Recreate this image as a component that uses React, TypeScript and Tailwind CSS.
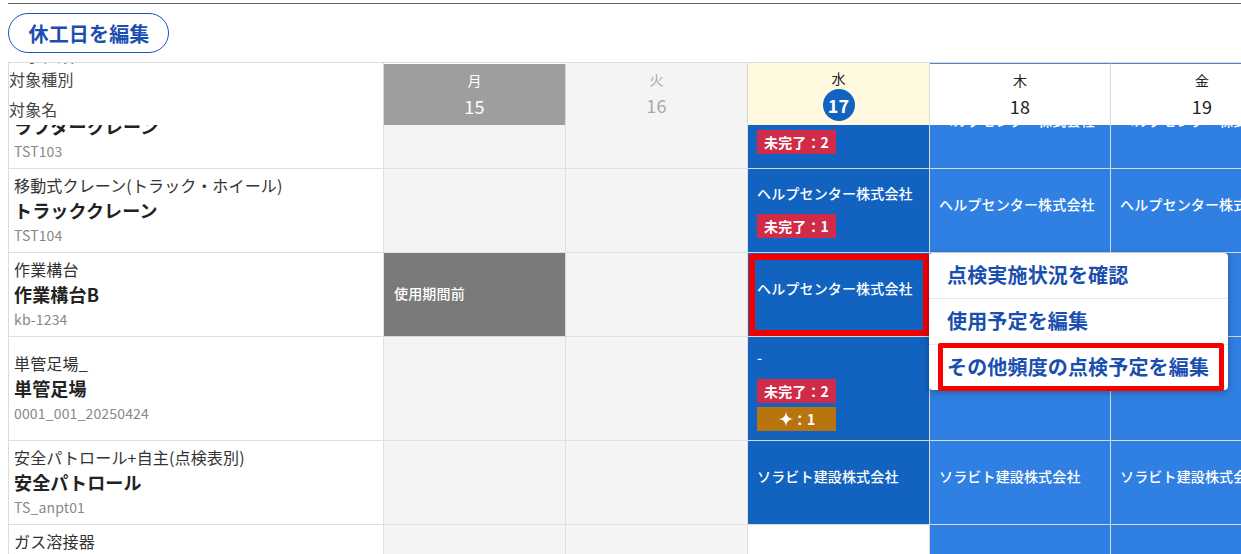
const rows = [
  { label: "ラフタークレーン", name: "ラフタークレーン", code: "TST103", height: "h-[84px]", before: false },
  { label: "移動式クレーン(トラック・ホイール)", name: "トラッククレーン", code: "TST104", height: "h-[84px]", before: false },
  { label: "作業構台", name: "作業構台B", code: "kb-1234", height: "h-[84px]", before: true },
  { label: "単管足場_", name: "単管足場", code: "0001_001_20250424", height: "h-[104px]", before: false },
  { label: "安全パトロール+自主(点検表別)", name: "安全パトロール", code: "TS_anpt01", height: "h-[84px]", before: false },
];

const help = "ヘルプセンター株式会社";
const sorabito = "ソラビト建設株式会社";

// 行ごとの水曜セルの中身
const wed = [
  { text: help, late: 2, star: 0 },
  { text: help, late: 1, star: 0 },
  { text: help, late: 0, star: 0 },
  { text: "-", late: 2, star: 1 },
  { text: sorabito, late: 0, star: 0 },
];
const others = [help, help, "", "", sorabito];

function Badge({ color, children }: { color: string; children: React.ReactNode }) {
  return (
    <div className={`flex h-6 w-[79px] items-center justify-center text-sm font-bold text-white ${color}`}>
      {children}
    </div>
  );
}

function DayHead({ day, num, className }: { day: string; num: string; className: string }) {
  return (
    <div className={`flex flex-col items-center border-r border-[#d9d9d9] pt-[6px] ${className}`}>
      <span className="text-sm leading-5">{day}</span>
      <span className="mt-[4px] text-lg leading-6">{num}</span>
    </div>
  );
}

function BlueCell({ text }: { text: string }) {
  return (
    <div className="flex items-center overflow-hidden border-r border-b border-[#d9d9d9] bg-[#3080e3] pb-[13px] pl-[9px] text-sm font-medium whitespace-nowrap text-white">
      {text}
    </div>
  );
}

export default function App() {
  return (
    <div
      className="relative h-screen w-full overflow-hidden bg-white tracking-[0.01em] text-[#222]"
      style={{ fontFamily: '"Noto Sans CJK JP", "Noto Sans", sans-serif' }}
    >
      <div className="ml-2 mt-[3px] h-px bg-[#666]" />
      <button
        type="button"
        className="ml-2 mt-[9px] flex h-10 w-[161px] items-center justify-center rounded-full border border-[#1a56b5] pt-[2px] pl-[1px] text-xl font-bold text-[#1a4fb0]"
      >
        休工日を編集
      </button>

      {/* 表 */}
      <div className="ml-2 mt-[9px] border-t border-l border-[#dcdcdc]">
        <div className="relative z-10 grid h-[62px] grid-cols-[375px_182px_182px_182px_181px_183px] bg-white">
          <div className="overflow-hidden border-r border-[#d9d9d9] text-base leading-[30px] text-[#444]">
            <div className="-mt-[23px] mb-[-6px]">工事種類</div>
            <div>対象種別</div>
            <div>対象名</div>
          </div>
          <DayHead day="月" num="15" className="mt-px bg-[#9e9e9e] text-white" />
          <DayHead day="火" num="16" className="bg-[#f4f4f4] text-[#aaa]" />
          <div className="flex flex-col items-center border-r border-[#d9d9d9] bg-[#fff9e0] pt-[5px]">
            <span className="text-sm leading-5">水</span>
            <span className="mt-px flex h-8 w-8 items-center justify-center rounded-full bg-[#1263c0] text-lg font-bold text-white">
              17
            </span>
          </div>
          <DayHead day="木" num="18" className="border-t border-t-[#4a86d0] bg-white" />
          <DayHead day="金" num="19" className="border-t border-t-[#4a86d0] bg-white" />
        </div>

        <div className="-mt-[40px]">
          {rows.map((r, i) => (
            <div key={r.code} className={`grid grid-cols-[375px_182px_182px_182px_181px_183px] ${r.height}`}>
              <div className="flex flex-col justify-center border-r border-b border-[#e0e0e0] pb-px pl-[5px]">
                <div className="text-base leading-[25px] text-[#333]">{r.label}</div>
                <div className="text-lg leading-[25px] font-bold">{r.name}</div>
                <div className="text-sm leading-[25px] text-[#888]">{r.code}</div>
              </div>
              {r.before ? (
                <div className="flex items-center border-r border-b border-[#d9d9d9] bg-[#7a7a7a] pb-[3px] pl-[10px] text-sm font-medium text-white">
                  使用期間前
                </div>
              ) : (
                <div className="border-r border-b border-[#e0e0e0] bg-[#f4f4f4]" />
              )}
              <div className="border-r border-b border-[#e0e0e0] bg-[#f4f4f4]" />
              <div className="flex flex-col justify-center border-r border-b border-[#d9d9d9] bg-[#1263c0] pl-[9px] text-sm font-medium text-white">
                <div className={wed[i].star ? "mb-[12px] leading-5" : wed[i].late ? "mb-[11px] leading-5" : "mb-[13px] leading-5"}>
                  {wed[i].text}
                </div>
                {wed[i].late > 0 && <Badge color="bg-[#d02b48]">未完了：{wed[i].late}</Badge>}
                {wed[i].star > 0 && (
                  <div className="mt-[4px]">
                    <Badge color="bg-[#b8740f]">
                      <svg viewBox="0 0 16 16" className="h-[16px] w-[16px] fill-white">
                        <path d="M8 0.5C8.6 5.4 10.6 7.4 15.5 8 10.6 8.6 8.6 10.6 8 15.5 7.4 10.6 5.4 8.6 0.5 8 5.4 7.4 7.4 5.4 8 0.5Z" />
                      </svg>
                      <span className="-ml-[1px]">：{wed[i].star}</span>
                    </Badge>
                  </div>
                )}
              </div>
              <BlueCell text={others[i]} />
              <BlueCell text={others[i]} />
            </div>
          ))}
          {/* 最終行（見切れ） */}
          <div className="grid h-[40px] grid-cols-[375px_182px_182px_182px_181px_183px]">
            <div className="border-r border-[#e0e0e0] pt-[4px] pl-[5px] text-base leading-[25px] text-[#333]">ガス溶接器</div>
            <div className="border-r border-[#e0e0e0] bg-[#f4f4f4]" />
            <div className="border-r border-[#e0e0e0] bg-[#f4f4f4]" />
            <div className="border-r border-[#d9d9d9] bg-white" />
            <div className="border-r border-[#d9d9d9] bg-[#3080e3]" />
            <div className="bg-[#3080e3]" />
          </div>
        </div>
      </div>

      {/* 対象セルの赤枠 */}
      <div className="absolute left-[749px] top-[254px] z-20 h-[82px] w-[180px] rounded-[2px] border-[6px] border-[#f50000]" />

      {/* コンテキストメニュー */}
      <div className="absolute left-[929px] top-[253px] z-20 w-[299px] rounded-[4px] bg-white text-xl font-bold text-[#1a4fb0] shadow-[0_2px_8px_rgba(0,0,0,0.3)]">
        <div className="flex h-[46px] items-center border-b border-[#e8e8e8] pb-[2px] pl-[18px]">点検実施状況を確認</div>
        <div className="flex h-[46px] items-center border-b border-[#e8e8e8] pb-[2px] pl-[18px]">使用予定を編集</div>
        <div className="flex h-[45px] items-center pb-[2px] pl-[18px]">その他頻度の点検予定を編集</div>
        <div className="absolute left-[9px] top-[90px] h-[48px] w-[286px] rounded-[2px] border-[5px] border-[#f50000]" />
      </div>
    </div>
  );
}
